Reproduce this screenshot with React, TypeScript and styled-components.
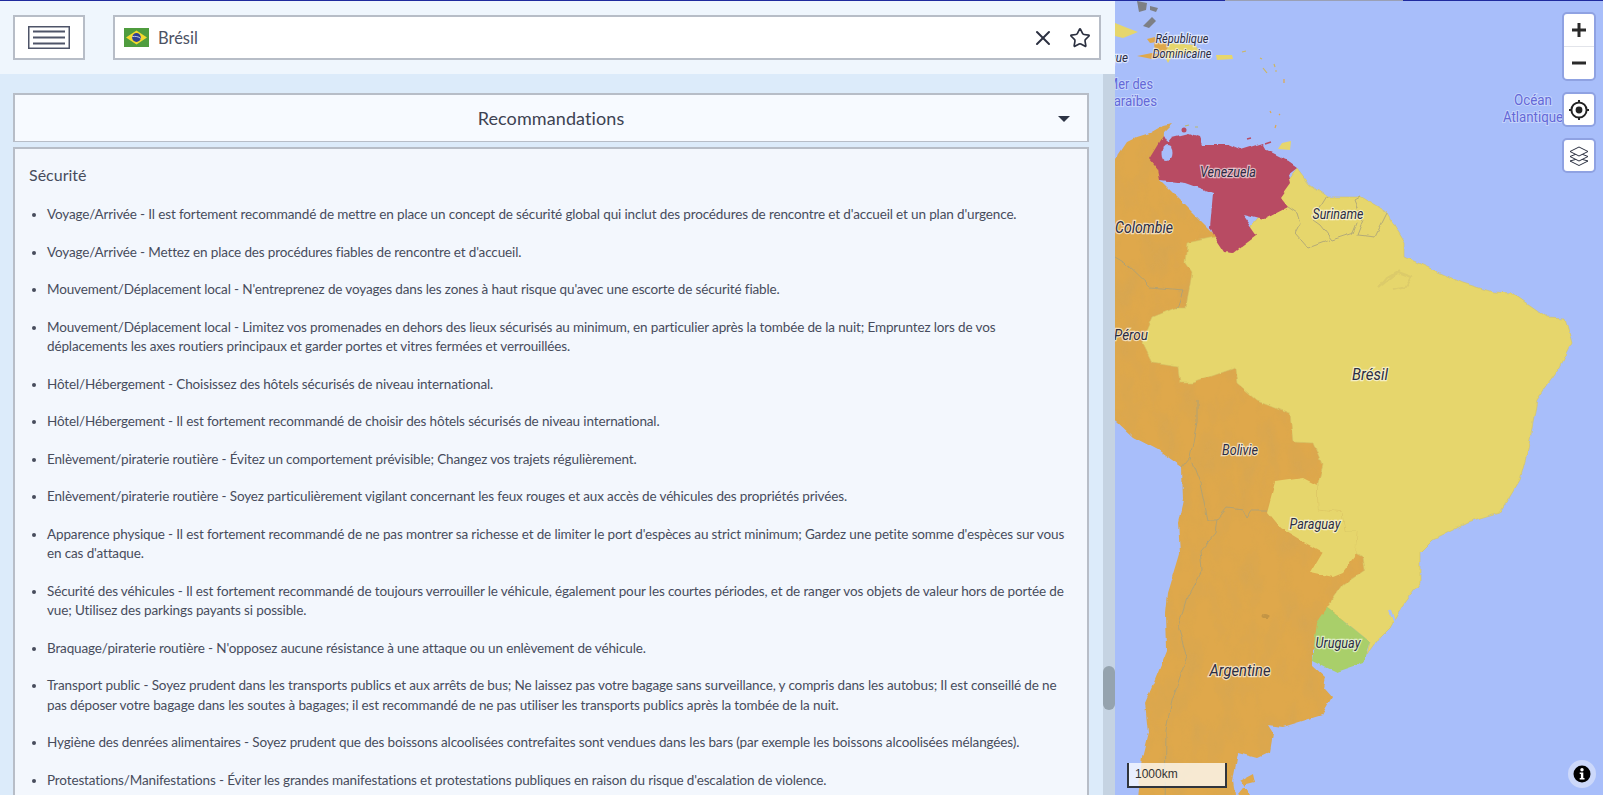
import React from 'react';
import styled, { createGlobalStyle } from 'styled-components';
import { X, Star } from 'lucide-react';

const GlobalStyle = createGlobalStyle`
  html, body { margin: 0; padding: 0; height: 100%; overflow: hidden; }
  body { font-family: Lato, "Noto Sans", sans-serif; color: #474c5c; font-variant-ligatures: none; }
`;

const Page = styled.div`
  position: relative;
  display: flex;
  width: 100%;
  height: 100vh;
  overflow: hidden;
`;

const LoadingBar = styled.div`
  position: absolute;
  inset: 0 0 auto 0;
  height: 1px;
  z-index: 5;
  background: linear-gradient(90deg, #1f2a9e 0 1225px, #9aa0b4 1225px 1403px, #1f2a9e 1403px);
`;

const LeftColumn = styled.div`
  display: flex;
  flex-direction: column;
  width: 1115px;
  flex: none;
  height: 100%;
`;

const Header = styled.header`
  display: flex;
  gap: 28px;
  height: 74px;
  box-sizing: border-box;
  padding: 15px 14px 14px 13px;
  background: #eff6fd;
`;

const MenuButton = styled.button`
  display: flex;
  align-items: center;
  justify-content: center;
  width: 72px;
  height: 45px;
  padding: 0;
  background: #fff;
  border: 2px solid #b7bdc7;
`;

const SearchBox = styled.div`
  flex: 1;
  display: flex;
  align-items: center;
  height: 45px;
  box-sizing: border-box;
  padding: 0 8px 0 9px;
  background: #fff;
  border: 2px solid #b7bdc7;
`;

const CountryName = styled.span`
  flex: 1;
  margin-left: 9px;
  font-size: 16.5px;
  color: #4d5263;
`;

const IconSlot = styled.span`
  display: flex;
  margin-left: ${(props: { $gap: number }) => props.$gap}px;
  color: #2b3040;
`;

const Body = styled.div`
  flex: 1;
  display: flex;
  min-height: 0;
  background: #dcebfa;
`;

const ScrollPane = styled.div`
  flex: 1;
  min-width: 0;
  overflow: hidden;
  padding: 19px 14px 0 13px;
`;

const Scrollbar = styled.div`
  flex: none;
  width: 12px;
  background: #c5d3e2;
`;

const ScrollThumb = styled.div`
  width: 12px;
  height: 44px;
  margin-top: 592px;
  border-radius: 6px;
  background: #95a3ae;
`;

const AccordionHead = styled.div`
  position: relative;
  display: flex;
  align-items: center;
  justify-content: center;
  height: 49px;
  box-sizing: border-box;
  background: #f7faff;
  border: 2px solid #b7bdc7;
  border-bottom-width: 1px;
  font-size: 18px;
  letter-spacing: 0.1px;
  color: #3d4252;
`;

const Caret = styled.span`
  position: absolute;
  right: 17px;
  top: 21px;
  width: 0;
  height: 0;
  border-left: 6px solid transparent;
  border-right: 6px solid transparent;
  border-top: 6px solid #2c3345;
`;

const AccordionPanel = styled.section`
  margin-top: 5px;
  padding: 16px 14px 60px 14px;
  background: #f3f7fd;
  border: 2px solid #b7bdc7;
  border-bottom: 0;
`;

const SectionTitle = styled.h3`
  margin: 0 0 20px;
  font-size: 16px;
  font-weight: 400;
  line-height: 20px;
  color: #474c5c;
`;

const Advice = styled.ul`
  margin: 0;
  padding: 0 0 0 18px;
  list-style: disc;
`;

const AdviceItem = styled.li`
  margin-bottom: 18px;
  font-size: 13.5px;
  letter-spacing: -0.135px;
  line-height: 19.5px;
  white-space: pre;
  color: #474c5c;
`;

const MapPane = styled.div`
  position: relative;
  flex: 1;
  min-width: 0;
  height: 100%;
  overflow: hidden;
  background: #a8befa;
`;

const MapCanvas = styled.svg`
  display: block;
  width: 100%;
  height: 100%;
`;

const MapControls = styled.div`
  position: absolute;
  top: 12px;
  right: 7px;
  display: flex;
  flex-direction: column;
  gap: 11px;
`;

const ControlGroup = styled.div`
  display: flex;
  flex-direction: column;
  width: 34px;
  box-sizing: border-box;
  background: #fff;
  border: 2px solid #8fa2e2;
  border-radius: 5px;
  overflow: hidden;
`;

const ControlButton = styled.div`
  display: flex;
  align-items: center;
  justify-content: center;
  height: ${(props: { $h?: number }) => props.$h ?? 31}px;
  & + & { border-top: 1px solid #e2e4ea; }
`;

const ScaleBar = styled.div`
  position: absolute;
  left: 12px;
  bottom: 7px;
  width: 100px;
  height: 25px;
  box-sizing: border-box;
  padding: 3px 0 0 6px;
  background: rgba(255, 255, 255, 0.75);
  border: 2px solid #30343c;
  border-top: 0;
  font-family: "Liberation Sans", sans-serif;
  font-size: 12px;
  line-height: 17px;
  color: #333;
`;

const InfoBadge = styled.div`
  position: absolute;
  right: 7px;
  bottom: 7px;
  display: flex;
  align-items: center;
  justify-content: center;
  width: 28px;
  height: 28px;
  border-radius: 50%;
  background: #ccd8fa;
`;

const advice = [
  "Voyage/Arrivée - Il est fortement recommandé de mettre en place un concept de sécurité global qui inclut des procédures de rencontre et d'accueil et un plan d'urgence.",
  "Voyage/Arrivée - Mettez en place des procédures fiables de rencontre et d'accueil.",
  "Mouvement/Déplacement local - N'entreprenez de voyages dans les zones à haut risque qu'avec une escorte de sécurité fiable.",
  "Mouvement/Déplacement local - Limitez vos promenades en dehors des lieux sécurisés au minimum, en particulier après la tombée de la nuit; Empruntez lors de vos\ndéplacements les axes routiers principaux et garder portes et vitres fermées et verrouillées.",
  'Hôtel/Hébergement - Choisissez des hôtels sécurisés de niveau international.',
  'Hôtel/Hébergement - Il est fortement recommandé de choisir des hôtels sécurisés de niveau international.',
  'Enlèvement/piraterie routière - Évitez un comportement prévisible; Changez vos trajets régulièrement.',
  'Enlèvement/piraterie routière - Soyez particulièrement vigilant concernant les feux rouges et aux accès de véhicules des propriétés privées.',
  "Apparence physique - Il est fortement recommandé de ne pas montrer sa richesse et de limiter le port d'espèces au strict minimum; Gardez une petite somme d'espèces sur vous\nen cas d'attaque.",
  'Sécurité des véhicules - Il est fortement recommandé de toujours verrouiller le véhicule, également pour les courtes périodes, et de ranger vos objets de valeur hors de portée de\nvue; Utilisez des parkings payants si possible.',
  "Braquage/piraterie routière - N'opposez aucune résistance à une attaque ou un enlèvement de véhicule.",
  'Transport public - Soyez prudent dans les transports publics et aux arrêts de bus; Ne laissez pas votre bagage sans surveillance, y compris dans les autobus; Il est conseillé de ne\npas déposer votre bagage dans les soutes à bagages; il est recommandé de ne pas utiliser les transports publics après la tombée de la nuit.',
  'Hygiène des denrées alimentaires - Soyez prudent que des boissons alcoolisées contrefaites sont vendues dans les bars (par exemple les boissons alcoolisées mélangées).',
  "Protestations/Manifestations - Éviter les grandes manifestations et protestations publiques en raison du risque d'escalation de violence.",
];

const countries = {
  orange:
    '1115,160 1127,142 1137,137 1150,133 1162,126 1172,124 1163,133 1160,180 1230,250 1320,430 1380,500 1380,590 1340,625 1312,650 1312,665 1326,678 1324,688 1332,697 1322,715 1283,727 1268,725 1273,733 1270,752 1257,758 1238,753 1233,780 1237,810 1137,810 1142,757 1148,733 1145,703 1155,680 1167,650 1166,613 1168,593 1180,553 1178,523 1183,500 1182,467 1158,450 1133,437 1115,420 1100,410 1100,165',
  fuego: '1240,780 1253,773 1255,782 1247,784 1238,795 1260,810',
  brazil:
    '1297,168 1310,185 1327,197 1360,197 1387,213 1405,243 1405,257 1427,267 1463,283 1493,292 1513,293 1547,317 1565,318 1572,343 1560,367 1537,400 1528,450 1520,480 1500,513 1467,523 1433,540 1420,553 1420,583 1402,607 1390,627 1380,637 1367,655 1370,642 1343,620 1327,608 1343,585 1365,570 1363,557 1355,553 1357,532 1345,532 1342,513 1318,510 1317,483 1322,465 1313,443 1293,442 1290,413 1257,400 1237,383 1235,368 1192,383 1180,383 1178,367 1152,363 1142,343 1153,317 1175,308 1186,308 1192,273 1185,263 1187,243 1215,237 1240,240 1280,190',
  venezuela:
    '1149,159 1163,136 1167,143 1172,137 1188,133 1200,137 1203,145 1228,145 1240,150 1263,143 1267,150 1283,158 1297,168 1288,175 1290,183 1280,197 1288,207 1263,220 1243,215 1257,235 1233,253 1225,252 1215,237 1210,227 1213,193 1185,183 1160,180 1158,170',
  paraguay:
    '1275,482 1303,478 1317,485 1318,510 1342,513 1345,532 1357,532 1355,557 1343,573 1333,577 1310,572 1322,552 1300,540 1280,528 1267,512',
  uruguay: '1327,608 1343,620 1370,642 1363,663 1337,672 1312,660 1317,623',
};

const borders = [
  '1115,257 1125,263 1150,287 1183,290 1177,308',
  '1197,400 1197,423 1190,457 1182,467',
  '1190,457 1200,483 1208,520 1217,520 1227,508 1243,510 1247,518 1252,510 1267,510',
  '1217,520 1215,533 1200,550 1202,570 1187,597 1178,627 1187,657 1180,677 1172,700 1166,730 1165,810',
  '1288,207 1297,213 1300,223 1295,233 1308,248 1330,240',
  '1327,197 1313,220 1320,225 1332,240 1353,233 1357,223',
  '1360,197 1355,200 1363,220 1357,235 1375,237 1387,213',
];

type Label = { text: string; x: number; y: number; w: number; size?: number };

const countryLabels: Label[] = [
  { text: 'République', x: 1182, y: 43, w: 53, size: 13 },
  { text: 'Dominicaine', x: 1182, y: 58, w: 59, size: 13 },
  { text: 'Venezuela', x: 1228, y: 177, w: 56, size: 14 },
  { text: 'Colombie', x: 1144, y: 233, w: 58, size: 16 },
  { text: 'Suriname', x: 1338, y: 219, w: 51, size: 14 },
  { text: 'Pérou', x: 1131, y: 340, w: 34, size: 15 },
  { text: 'Brésil', x: 1370, y: 380, w: 36, size: 17 },
  { text: 'Bolivie', x: 1240, y: 455, w: 36, size: 14 },
  { text: 'Paraguay', x: 1315, y: 529, w: 51, size: 14 },
  { text: 'Uruguay', x: 1338, y: 648, w: 45, size: 14 },
  { text: 'Argentine', x: 1240, y: 676, w: 61, size: 17 },
];

const waterLabels: Label[] = [
  { text: 'Mer des', x: 1130, y: 89, w: 46 },
  { text: 'Caraïbes', x: 1131, y: 106, w: 52 },
  { text: 'Océan', x: 1533, y: 105, w: 38 },
  { text: 'Atlantique', x: 1533, y: 122, w: 60 },
];

const CountryText = styled.text`
  font-family: Roboto, sans-serif;
  font-style: italic;
  fill: #2a2c44;
  stroke: rgba(255, 255, 255, 0.6);
  stroke-width: 2.5px;
  paint-order: stroke;
  text-anchor: middle;
`;

const WaterText = styled.text`
  font-family: Roboto, sans-serif;
  font-size: 14px;
  fill: #6468d8;
  stroke: rgba(255, 255, 255, 0.35);
  stroke-width: 2px;
  paint-order: stroke;
  text-anchor: middle;
`;

const MenuIcon = () => (
  <svg width="42" height="23" viewBox="0 0 42 23">
    <rect x="0.75" y="0.75" width="40.5" height="21.5" fill="none" stroke="#4e5468" strokeWidth="1.5" />
    <path d="M5 5.5h32M5 11.5h32M5 17.5h32" stroke="#4e5468" strokeWidth="2" />
  </svg>
);

const BrazilFlag = () => (
  <svg width="25" height="19" viewBox="0 0 25 19">
    <rect width="25" height="19" fill="#4f9c3e" />
    <path d="M12.5 2.5 23 9.5 12.5 16.5 2 9.5z" fill="#f3d92e" />
    <circle cx="12.5" cy="9.5" r="4.4" fill="#2f3f94" />
    <path d="M8.3 8.6c3-.6 6-.1 8.3 1.7" stroke="#e9eef0" strokeWidth="0.8" fill="none" />
  </svg>
);

const LocateIcon = () => (
  <svg width="22" height="22" viewBox="0 0 22 22" fill="none" stroke="#222">
    <circle cx="11" cy="11" r="7.6" strokeWidth="2" />
    <circle cx="11" cy="11" r="3.4" fill="#222" stroke="none" />
    <path d="M11 1v3M11 18v3M1 11h3M18 11h3" strokeWidth="2" />
  </svg>
);

const LayersIcon = () => (
  <svg width="20" height="20" viewBox="0 0 20 20" fill="#fff" stroke="#2b3040" strokeWidth="1">
    <path d="M10 12.5 19 15 10 19.5 1 15z" />
    <path d="M10 7 19 10.5 10 15 1 10.5z" />
    <path d="M10 1 19 5.5 10 10 1 5.5z" />
  </svg>
);

const InfoIcon = () => (
  <svg width="18" height="18" viewBox="0 0 18 18">
    <circle cx="9" cy="9" r="8.5" fill="#000" />
    <circle cx="9" cy="4.8" r="1.7" fill="#fff" />
    <path d="M6.7 7.4h3.6v5.6h1.2v1.6H6.7V13h1.2V9H6.7z" fill="#fff" />
  </svg>
);

const WorldMap = () => (
  <MapCanvas viewBox="1115 0 488 795" preserveAspectRatio="none">
    <defs>
      <filter id="hills" x="0" y="0" width="100%" height="100%">
        <feTurbulence type="fractalNoise" baseFrequency="0.05 0.025" numOctaves="4" seed="7" />
        <feColorMatrix values="0 0 0 0 0.55  0 0 0 0 0.36  0 0 0 0 0.12  1.6 0 0 0 -0.62" />
        <feComposite in2="SourceAlpha" operator="in" />
      </filter>
      <filter id="rough" filterUnits="userSpaceOnUse" x="1090" y="90" width="513" height="730">
        <feTurbulence type="fractalNoise" baseFrequency="0.07" numOctaves="3" seed="3" result="noise" />
        <feDisplacementMap in="SourceGraphic" in2="noise" scale="5" xChannelSelector="R" yChannelSelector="G" />
      </filter>
    </defs>

    {/* Caribbean */}
    <polygon points="1115,23 1125,27 1138,32 1123,38 1115,36" fill="#e6d66c" />
    <polygon points="1137,1 1147,3 1146,10 1139,12" fill="#7d7f84" />
    <polygon points="1150,6 1158,8 1156,12 1150,10" fill="#7d7f84" />
    <polygon points="1143,26 1152,17 1156,21 1149,28" fill="#7d7f84" />
    <polygon points="1137,56 1152,53 1170,56 1152,59" fill="#dfa84b" />
    <polygon points="1147,39 1155,37 1157,42 1150,43" fill="#dfa84b" />
    <polygon points="1154,43 1166,43 1170,52 1155,52" fill="#dfa84b" />
    <polygon points="1170,43 1195,45 1200,52 1172,56 1168,63 1164,55" fill="#e6d66c" />
    <polygon points="1216,55 1232,55 1233,59 1217,60" fill="#e6d66c" />
    <path d="M1242 52l4-1M1260 58l2 1M1263 68l4 5M1274 64l1 3M1275 71l2 0" stroke="#cdb65f" strokeWidth="1.2" fill="none" />
    <path d="M1284 79v4M1276 125l-1 3M1270 111l1 2M1280 114l-1 1" stroke="#dfa84b" strokeWidth="1.2" fill="none" />
    <path d="M1185 126l4-1M1195 127l3 0" stroke="#b8b86c" strokeWidth="1.2" fill="none" />
    <polygon points="1282,143 1291,141 1290,150 1278,149" fill="#e6d66c" />
    <circle cx="1184" cy="130" r="2.5" fill="#b84c64" />
    <path d="M1247 139l4-1M1265 144l6-2" stroke="#b84c64" strokeWidth="1.4" fill="none" />

    {/* South America */}
    <g filter="url(#rough)">
      <polygon points={countries.orange} fill="#dfa84b" />
      <polygon points={countries.fuego} fill="#dfa84b" />
      <polygon points={countries.orange} fill="#000" filter="url(#hills)" opacity="0.35" />
      <polygon points={countries.brazil} fill="#e6d66c" stroke="#d3c266" strokeWidth="0.6" />
      <polygon points={countries.paraguay} fill="#e6d66c" />
      <polygon points={countries.venezuela} fill="#b84c64" />
      <ellipse cx="1167" cy="153" rx="5.5" ry="8" fill="#a8befa" />
      <polygon points={countries.uruguay} fill="#a9cf6b" />
      <path d="M1390 610l5 14-8 10" stroke="#a8befa" strokeWidth="2" fill="none" />
      <path d="M1400 270l-14 8-8 10 20-16 14 5-6 10-12 3" stroke="#dccb6a" strokeWidth="2" fill="none" />
      <ellipse cx="1266" cy="616" rx="3.5" ry="2" fill="#c39545" />
      {borders.map((points) => (
        <polyline key={points} points={points} fill="none" stroke="#a8a07a" strokeOpacity="0.8" strokeWidth="1" />
      ))}
    </g>

    {countryLabels.map((l) => (
      <CountryText key={l.text} x={l.x} y={l.y} fontSize={l.size} textLength={l.w} lengthAdjust="spacingAndGlyphs">
        {l.text}
      </CountryText>
    ))}
    {waterLabels.map((l) => (
      <WaterText key={l.text} x={l.x} y={l.y} textLength={l.w} lengthAdjust="spacingAndGlyphs">
        {l.text}
      </WaterText>
    ))}
    <CountryText x="1103" y="62" fontSize="13" textLength="50" lengthAdjust="spacingAndGlyphs">
      Jamaïque
    </CountryText>
  </MapCanvas>
);

const App: React.FC = () => {
  return (
    <Page>
      <GlobalStyle />
      <LoadingBar />
      <LeftColumn>
        <Header>
          <MenuButton aria-label="menu">
            <MenuIcon />
          </MenuButton>
          <SearchBox>
            <BrazilFlag />
            <CountryName>Brésil</CountryName>
            <IconSlot $gap={0}>
              <X size={24} strokeWidth={2} />
            </IconSlot>
            <IconSlot $gap={14}>
              <Star size={22} strokeWidth={1.8} />
            </IconSlot>
          </SearchBox>
        </Header>
        <Body>
          <ScrollPane>
            <AccordionHead>
              Recommandations
              <Caret />
            </AccordionHead>
            <AccordionPanel>
              <SectionTitle>Sécurité</SectionTitle>
              <Advice>
                {advice.map((item) => (
                  <AdviceItem key={item}>{item}</AdviceItem>
                ))}
              </Advice>
            </AccordionPanel>
          </ScrollPane>
          <Scrollbar>
            <ScrollThumb />
          </Scrollbar>
        </Body>
      </LeftColumn>
      <MapPane>
        <WorldMap />
        <MapControls>
          <ControlGroup>
            <ControlButton $h={32}>
              <svg width="14" height="14" viewBox="0 0 14 14"><path d="M7 0v14M0 7h14" stroke="#2a2a2a" strokeWidth="3" /></svg>
            </ControlButton>
            <ControlButton $h={32}>
              <svg width="14" height="14" viewBox="0 0 14 14"><path d="M0 7h14" stroke="#2a2a2a" strokeWidth="3" /></svg>
            </ControlButton>
          </ControlGroup>
          <ControlGroup>
            <ControlButton>
              <LocateIcon />
            </ControlButton>
          </ControlGroup>
          <ControlGroup>
            <ControlButton>
              <LayersIcon />
            </ControlButton>
          </ControlGroup>
        </MapControls>
        <ScaleBar>1000km</ScaleBar>
        <InfoBadge>
          <InfoIcon />
        </InfoBadge>
      </MapPane>
    </Page>
  );
};

export default App;
